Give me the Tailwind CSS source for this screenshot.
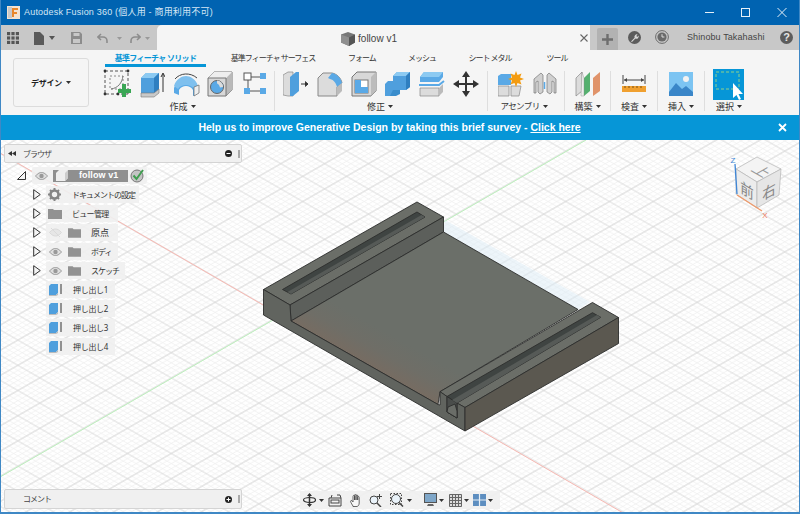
<!DOCTYPE html>
<html lang="ja">
<head>
<meta charset="utf-8">
<title>Autodesk Fusion 360</title>
<script src="https://cdn.jsdelivr.net/npm/@tailwindcss/browser@4"></script>
</head>
<body class="m-0 bg-white [font-family:'Noto_Sans','Noto_Sans_CJK_JP',sans-serif]">
<div class="relative flex h-[514px] w-[800px] flex-col overflow-hidden">

  <!-- Title bar -->
  <header class="flex h-[25px] items-center bg-[#0063b1] text-white">
    <svg class="ml-[7px] h-[13px] w-[13px]" viewBox="0 0 13 13"><rect width="13" height="13" fill="#f4e3d0"/><rect x="1" y="1" width="4" height="11" fill="#c9c9c9"/><path d="M5 2h6v2H7v2h3v2H7v3H5z" fill="#e8872b"/></svg>
    <span class="ml-[4px] whitespace-nowrap text-[9px] leading-none tracking-[0.2px] text-[#d5e6f5] [font-family:'Liberation_Sans','Noto_Sans_CJK_JP',sans-serif]">Autodesk Fusion 360 (個人用 - 商用利用不可)</span>
    <div class="ml-auto flex items-center">
      <svg class="h-[25px] w-[36px]" viewBox="0 0 36 25"><path d="M13 12.5h9" stroke="#e6f0f8" stroke-width="1"/></svg>
      <svg class="h-[25px] w-[36px]" viewBox="0 0 36 25"><rect x="13.5" y="8.5" width="8" height="8" fill="none" stroke="#e6f0f8"/></svg>
      <svg class="h-[25px] w-[36px]" viewBox="0 0 36 25"><path d="M13.5 8l9 9M22.5 8l-9 9" stroke="#e6f0f8"/></svg>
    </div>
  </header>

  <!-- Document tab row -->
  <div class="flex h-[25px] items-stretch bg-[#c8c8c8]">
    <div class="flex w-[157px] items-center pt-[1px]">
      <svg class="ml-[7px] h-[12px] w-[12px]" viewBox="0 0 12 12" fill="#555"><rect width="3.2" height="3.2"/><rect x="4.4" width="3.2" height="3.2"/><rect x="8.8" width="3.2" height="3.2"/><rect y="4.4" width="3.2" height="3.2"/><rect x="4.4" y="4.4" width="3.2" height="3.2"/><rect x="8.8" y="4.4" width="3.2" height="3.2"/><rect y="8.8" width="3.2" height="3.2"/><rect x="4.4" y="8.8" width="3.2" height="3.2"/><rect x="8.8" y="8.8" width="3.2" height="3.2"/></svg>
      <svg class="ml-[15px] h-[13px] w-[10px]" viewBox="0 0 10 13"><path d="M0 0h6l4 4v9H0z" fill="#5a5a5a"/></svg>
      <svg class="ml-[5px] h-[4px] w-[6px]" viewBox="0 0 6 4"><path d="M0 0h6L3 4z" fill="#555"/></svg>
      <svg class="ml-[16px] h-[12px] w-[11px]" viewBox="0 0 11 12"><path d="M0 0h9l2 2v10H0z" fill="#8c8c8c"/><rect x="2.5" y="1" width="6" height="3" fill="#c8c8c8"/><rect x="2" y="7" width="7" height="4" fill="#c8c8c8"/></svg>
      <svg class="ml-[15px] h-[11px] w-[11px]" viewBox="0 0 11 11"><path d="M4 1L.8 4 4 7M1 4h5a4 4 0 0 1 4 4v2" fill="none" stroke="#8c8c8c" stroke-width="1.6"/></svg>
      <svg class="ml-[9px] h-[3px] w-[5px]" viewBox="0 0 5 3"><path d="M0 0h5L2.5 3z" fill="#999"/></svg>
      <svg class="ml-[8px] h-[11px] w-[11px]" viewBox="0 0 11 11"><path d="M7 1l3.2 3L7 7M10 4H5a4 4 0 0 0-4 4v2" fill="none" stroke="#8c8c8c" stroke-width="1.6"/></svg>
      <svg class="ml-[4px] h-[3px] w-[5px]" viewBox="0 0 5 3"><path d="M0 0h5L2.5 3z" fill="#999"/></svg>
    </div>
    <div class="relative flex w-[433px] items-center justify-center rounded-tl-[5px] bg-[#f5f5f5] pr-[9px] pt-[2px]">
      <svg class="mr-[3px] h-[14px] w-[14px]" viewBox="0 0 14 14"><path d="M7 0l7 2.5v8L8 14l-8-3.5v-8z" fill="#777"/><path d="M0 2.5l8 3V14l-8-3.5z" fill="#8f8f8f"/><path d="M8 5.5l6-3v8L8 14z" fill="#555"/></svg>
      <span class="text-[10px] leading-none text-[#444] [font-family:'Liberation_Sans',sans-serif]">follow v1</span>
      <svg class="absolute right-[2px] top-[9px] h-[8px] w-[8px]" viewBox="0 0 8 8"><path d="M.5.5l7 7M7.5.5l-7 7" stroke="#666" stroke-width="1.1"/></svg>
    </div>
    <div class="mt-[3px] ml-[7px] flex w-[21px] items-center justify-center rounded-t-[2px] bg-[#b2b2b2]">
      <svg class="h-[11px] w-[11px]" viewBox="0 0 11 11"><path d="M5.5 0v11M0 5.5h11" stroke="#6e6e6e" stroke-width="2.4"/></svg>
    </div>
    <svg class="ml-[10px] mt-[6px] h-[13px] w-[13px]" viewBox="0 0 13 13"><circle cx="6.5" cy="6.5" r="6.5" fill="#5c5c5c"/><path d="M3 10.5l3.6-3.8a2.4 2.4 0 0 1 3-3.2L8.3 5l1 1 1.3-1.4a2.4 2.4 0 0 1-3.2 3L4 11z" fill="#d8d8d8"/></svg>
    <svg class="ml-[14px] mt-[5px] h-[14px] w-[14px]" viewBox="0 0 14 14"><circle cx="7" cy="7" r="6.4" fill="none" stroke="#6a6a6a"/><circle cx="7" cy="7" r="4.6" fill="#6a6a6a"/><path d="M7 4.2V7h2.4" fill="none" stroke="#ddd"/></svg>
    <span class="ml-[18px] flex w-[79px] items-center whitespace-nowrap text-[9px] leading-none tracking-[0.1px] text-[#444] [font-family:'Liberation_Sans',sans-serif]">Shinobu Takahashi</span>
    <svg class="mt-[6px] ml-[14px] h-[13px] w-[13px]" viewBox="0 0 13 13"><circle cx="6.5" cy="6.5" r="6.5" fill="#5c5c5c"/><text x="6.5" y="10.4" font-size="11" font-weight="700" text-anchor="middle" fill="#e6e6e6" font-family="Liberation Sans">?</text></svg>
  </div>

  <!-- Ribbon -->
  <div class="flex h-[65px] bg-[#f5f5f5]">
    <div class="w-[101px] pl-[13px] pt-[8px]">
      <div class="flex h-[49px] w-[76px] items-center justify-center gap-[4px] rounded-[3px] border border-[#dcdcdc] text-[8px] font-bold leading-none tracking-[-0.2px] text-[#222]">デザイン
        <svg class="h-[3px] w-[5px]" viewBox="0 0 5 3"><path d="M0 0h5L2.5 3z" fill="#333"/></svg>
      </div>
    </div>
    <div class="flex flex-1 flex-col">
      <nav class="flex h-[17px] whitespace-nowrap text-center text-[8px] leading-none tracking-[-1px] text-[#333]">
        <div class="ml-[4px] w-[101px] border-b-[3px] border-[#0696d7] pt-[4px] font-bold tracking-[-0.7px] text-[#0696d7]">基準フィーチャ ソリッド</div>
        <div class="w-[134px] pt-[4px]">基準フィーチャ サーフェス</div>
        <div class="w-[44px] pt-[4px]">フォーム</div>
        <div class="w-[76px] pt-[4px]">メッシュ</div>
        <div class="w-[60px] pt-[4px]">シート メタル</div>
        <div class="w-[74px] pt-[4px]">ツール</div>
      </nav>
      <div class="flex flex-1 text-[9px] leading-none text-[#333]">
        <!-- Create -->
        <section class="flex w-[173px] flex-col items-start">
          <div class="flex">
            <span class="flex h-[34px] w-[34px] items-center justify-center"><svg class="h-[30px] w-[30px]" viewBox="0 0 30 30"><rect x="2" y="2" width="23" height="23" fill="none" stroke="#555" stroke-dasharray="3 2"/><rect x="7" y="7" width="13" height="13" fill="none" stroke="#888" stroke-dasharray="2 2"/><path d="M8 20c7-1 11-6 12-13" fill="none" stroke="#777"/><circle cx="2" cy="2" r="1.4" fill="#333"/><circle cx="25" cy="2" r="1.4" fill="#333"/><circle cx="2" cy="25" r="1.4" fill="#333"/><circle cx="15" cy="25" r="1.4" fill="#333"/><path d="M21 15v13M15 22h13" stroke="#3aa655" stroke-width="4"/></svg></span>
            <span class="flex h-[34px] w-[34px] items-center justify-center"><svg class="h-[28px] w-[26px]" viewBox="0 0 26 28"><path d="M2 8l5-5h13v19l-5 4H2z" fill="#4f9fdd"/><path d="M2 8l5-5h13l-5 5z" fill="#8ccaf2"/><path d="M15 8l5-5v19l-5 4z" fill="#2f7fc0"/><path d="M2 23h13l5-4v4l-5 4H2z" fill="#c9c9c9" stroke="#777" stroke-width=".6"/><path d="M24 22V4M22 7l2-4 2 4" fill="none" stroke="#333" stroke-width="1"/></svg></span>
            <span class="flex h-[34px] w-[34px] items-center justify-center"><svg class="h-[26px] w-[28px]" viewBox="0 0 28 26"><path d="M2 17c2-6 8-9 12-9s10 3 12 9v5l-5 3v-6c-2-3-4-4-7-4s-5 1-7 4v5l-5-2z" fill="#5aa9e6"/><path d="M2 15c2-7 8-10 12-10s10 3 12 10l-4 3c-2-3-5-4-8-4s-6 1-8 4z" fill="#7fc0ee"/><path d="M3 8C8 2 18 1 25 7" fill="none" stroke="#444"/><path d="M22 16l5-2v8l-5 3z" fill="#eee" stroke="#666" stroke-width=".7"/></svg></span>
            <span class="flex h-[34px] w-[34px] items-center justify-center"><svg class="h-[26px] w-[26px]" viewBox="0 0 26 26"><path d="M1 7l6-6h18v18l-6 6H1z" fill="#d8d8d8" stroke="#777"/><path d="M19 7l6-6v18l-6 6z" fill="#b9b9b9"/><path d="M1 7l6-6h18l-6 6z" fill="#eee"/><path d="M1 7h18v18" fill="none" stroke="#777"/><circle cx="10" cy="16" r="6.5" fill="#5aa9e6" stroke="#666"/><path d="M10 9.5a6.500 6.500 0 0 1 6 6.500l-3 .5c-1-3-2-4-3-4z" fill="#dcdcdc"/></svg></span>
            <span class="flex h-[34px] w-[34px] items-center justify-center"><svg class="h-[24px] w-[23px]" viewBox="0 0 23 24"><path d="M5 5h13M5 19h13M5 5v14" stroke="#555"/><rect x="1" y="1" width="7" height="7" fill="#fff" stroke="#555"/><rect x="17" y="1" width="6" height="6" fill="#5aa9e6"/><rect x="1" y="16" width="6" height="6" fill="#5aa9e6"/><rect x="17" y="16" width="6" height="6" fill="#5aa9e6"/></svg></span>
          </div>
          <div class="mt-[1px] flex w-[163px] items-center justify-center gap-[3px]">作成<svg class="h-[3px] w-[5px]" viewBox="0 0 5 3"><path d="M0 0h5L2.5 3z" fill="#333"/></svg></div>
        </section>
        <i class="my-[4px] w-px bg-[#dedede]"></i>
        <!-- Modify -->
        <section class="flex w-[212px] flex-col pl-[4px]">
          <div class="flex">
            <span class="flex h-[34px] w-[34px] items-center justify-center"><svg class="h-[26px] w-[26px]" viewBox="0 0 26 26"><path d="M0 4l5-3h5v24H5l-5-1z" fill="#dcdcdc" stroke="#888" stroke-width=".7"/><path d="M7 6l6-5h3v19l-6 5H7z" fill="#4f9fdd"/><path d="M18 13h6M22 10.500l3 2.500-3 2.500" fill="#333" stroke="#333"/></svg></span>
            <span class="flex h-[34px] w-[34px] items-center justify-center"><svg class="h-[26px] w-[26px]" viewBox="0 0 26 26"><path d="M1 7l5-5h9c5 1 9 5 10 10l-5 4v9H1z" fill="#dcdcdc" stroke="#888"/><path d="M15 2c5 1 9 5 10 10l-5 4c-1-4-3-7-7-8l-2-1z" fill="#5aa9e6"/><path d="M20 16l5-4v8l-5 5z" fill="#bbb"/></svg></span>
            <span class="flex h-[34px] w-[34px] items-center justify-center"><svg class="h-[26px] w-[26px]" viewBox="0 0 26 26"><path d="M1 6l5-5h19v19l-5 5H1z" fill="#d8d8d8" stroke="#777"/><path d="M20 6l5-5v19l-5 5z" fill="#bcbcbc"/><rect x="4" y="9" width="13" height="13" fill="#fff" stroke="#777"/><path d="M4 9h6v7h7v6H4z" fill="#5aa9e6"/></svg></span>
            <span class="flex h-[34px] w-[34px] items-center justify-center"><svg class="h-[26px] w-[26px]" viewBox="0 0 26 26"><path d="M0 13l3-3h8v15H0z" fill="#4f9fdd"/><path d="M8 5l4-4h13v15l-4 3H8z" fill="#4f9fdd"/><path d="M8 5l4-4h13l-4 4z" fill="#8ccaf2"/><path d="M21 5l4-4v15l-4 3z" fill="#2f7fc0"/><path d="M8 19h7v4l-4 2H5z" fill="#3a8dcc"/></svg></span>
            <span class="flex h-[34px] w-[34px] items-center justify-center"><svg class="h-[26px] w-[26px]" viewBox="0 0 26 26"><path d="M1 6l4-5h19v5l-4 5H1z" fill="#5aa9e6"/><path d="M1 6l4-5h19l-4 5z" fill="#8ccaf2"/><path d="M0 14h20l5-4" fill="none" stroke="#5aa9e6" stroke-width="2"/><path d="M1 17h19v8H1z" fill="#dcdcdc" stroke="#888" stroke-width=".7"/><path d="M20 17l4-4v8l-4 4z" fill="#bbb"/></svg></span>
            <span class="flex h-[34px] w-[34px] items-center justify-center"><svg class="h-[26px] w-[26px]" viewBox="0 0 26 26"><path d="M13 3v20M3 13h20" stroke="#333" stroke-width="2"/><path d="M13 0l4 6H9zM13 26l-4-6h8zM0 13l6-4v8zM26 13l-6 4V9z" fill="#333"/></svg></span>
          </div>
          <div class="mt-[1px] flex w-[202px] items-center justify-center gap-[3px]">修正<svg class="h-[3px] w-[5px]" viewBox="0 0 5 3"><path d="M0 0h5L2.500 3z" fill="#333"/></svg></div>
        </section>
        <i class="my-[4px] w-px bg-[#dedede]"></i>
        <!-- Assemble -->
        <section class="flex w-[76px] flex-col pl-[6px]">
          <div class="flex">
            <span class="flex h-[34px] w-[34px] items-center justify-center"><svg class="h-[26px] w-[26px]" viewBox="0 0 26 26"><path d="M0 5l3-2h10v11H0z" fill="#5aa9e6"/><path d="M0 15h11v10H0z" fill="#dcdcdc" stroke="#888" stroke-width=".7"/><path d="M13 15h10l-2 10H13z" fill="#dcdcdc" stroke="#888" stroke-width=".7"/><path d="M18 0l1.500 4 4-1.500-1.500 4 4 1.500-4 1.500 1.500 4-4-1.500-1.500 4-1.500-4-4 1.500 1.500-4-4-1.500 4-1.500-1.500-4 4 1.500z" fill="#f39c12"/></svg></span>
            <span class="flex h-[34px] w-[34px] items-center justify-center"><svg class="h-[24px] w-[24px]" viewBox="0 0 24 24"><path d="M1 7l7-6 2 2v17l-3 2-2-2V9L3 10v11H1zM14 3l2-2 7 6v14h-2V10l-2-1v11l-2 2-3-2z" fill="#d0d0d0" stroke="#777" stroke-width=".7"/><path d="M11.500 10v7" stroke="#5aa9e6" stroke-width="1.500"/></svg></span>
          </div>
          <div class="mt-[1px] flex w-[60px] items-center justify-center gap-[3px] whitespace-nowrap text-[8.5px] tracking-[-0.6px]">アセンブリ<svg class="h-[3px] w-[5px]" viewBox="0 0 5 3"><path d="M0 0h5L2.500 3z" fill="#333"/></svg></div>
        </section>
        <i class="my-[4px] w-px bg-[#dedede]"></i>
        <!-- Construct -->
        <section class="flex w-[45px] flex-col items-center">
          <span class="flex h-[34px] w-[34px] items-center justify-center"><svg class="h-[26px] w-[25px]" viewBox="0 0 25 26"><path d="M1 7l6-6v19l-6 5z" fill="#dcdcdc" stroke="#888" stroke-width=".7"/><path d="M9 7l6-6v19l-6 5z" fill="#55b06f"/><path d="M18 7l7-6v19l-7 5z" fill="#e0936a"/><path d="M7 1l2 6v18H6z" fill="#eee" stroke="#888" stroke-width=".4"/></svg></span>
          <div class="mt-[1px] flex items-center gap-[3px]">構築<svg class="h-[3px] w-[5px]" viewBox="0 0 5 3"><path d="M0 0h5L2.500 3z" fill="#333"/></svg></div>
        </section>
        <i class="my-[4px] w-px bg-[#dedede]"></i>
        <!-- Inspect -->
        <section class="flex w-[46px] flex-col items-center">
          <span class="flex h-[34px] w-[34px] items-center justify-center"><svg class="h-[20px] w-[24px]" viewBox="0 0 24 20"><path d="M1 1v9M23 1v9M2 6h20" stroke="#444"/><path d="M2 6l3-2v4zM22 6l-3-2v4z" fill="#444"/><rect y="12" width="24" height="6" fill="#f0a030"/><path d="M3 12v2M7 12v2M11 12v2M15 12v2M19 12v2" stroke="#7a5010"/></svg></span>
          <div class="mt-[1px] flex items-center gap-[3px]">検査<svg class="h-[3px] w-[5px]" viewBox="0 0 5 3"><path d="M0 0h5L2.500 3z" fill="#333"/></svg></div>
        </section>
        <i class="my-[4px] w-px bg-[#dedede]"></i>
        <!-- Insert -->
        <section class="flex w-[46px] flex-col items-center">
          <span class="flex h-[34px] w-[34px] items-center justify-center"><svg class="h-[24px] w-[24px]" viewBox="0 0 24 24"><rect width="24" height="24" fill="#7cc4f2"/><path d="M0 20l7-9 6 6 4-3 7 6v4H0z" fill="#3a86c8"/><circle cx="17" cy="7" r="3" fill="#f2f2f2"/></svg></span>
          <div class="mt-[1px] flex items-center gap-[3px]">挿入<svg class="h-[3px] w-[5px]" viewBox="0 0 5 3"><path d="M0 0h5L2.500 3z" fill="#333"/></svg></div>
        </section>
        <i class="my-[4px] w-px bg-[#dedede]"></i>
        <!-- Select -->
        <section class="flex flex-1 flex-col pl-[8px]">
          <span class="mt-[2px] flex h-[31px] w-[31px] items-center justify-center bg-[#0696d7]"><svg class="h-[31px] w-[31px]" viewBox="0 0 31 31"><rect x="3" y="3" width="23" height="17" fill="none" stroke="#8fd08a" stroke-dasharray="3 2"/><path d="M20 14v15l3.500-3 2.500 5 2-1-2.500-5h4.500z" fill="#fff"/></svg></span>
          <div class="mt-[2px] flex w-[32px] items-center justify-center gap-[3px]">選択<svg class="h-[3px] w-[5px]" viewBox="0 0 5 3"><path d="M0 0h5L2.500 3z" fill="#333"/></svg></div>
        </section>
      </div>
    </div>
  </div>

  <!-- Survey banner -->
  <div class="relative flex h-[25px] items-center justify-center bg-[#0696d7] pr-[21px] text-[10.5px] font-bold leading-none text-white [font-family:'Liberation_Sans',sans-serif]">
    <p>Help us to improve Generative Design by taking this brief survey - <a class="underline">Click here</a></p>
    <svg class="absolute right-[13px] top-[8px] h-[9px] w-[9px]" viewBox="0 0 9 9"><path d="M1 1l7 7M8 1L1 8" stroke="#fff" stroke-width="1.800"/></svg>
  </div>

  <!-- Canvas -->
  <main class="relative flex-1 bg-white">
    <svg class="absolute inset-0 h-full w-full" viewBox="0 140 800 374">
      <defs>
        <pattern id="grid" patternUnits="userSpaceOnUse" width="25.3" height="25.3" patternTransform="matrix(.866 .498 .866 -.498 653.300 352.700)">
          <path d="M5.060 0v25.300M10.120 0v25.300M15.180 0v25.300M20.240 0v25.300M0 5.060h25.300M0 10.120h25.300M0 15.180h25.300M0 20.240h25.300" stroke="#f1f1f1" stroke-width=".9"/>
          <path d="M0 0v25.300M25.300 0v25.300M0 0h25.300M0 25.300h25.300" stroke="#d9d9d9" stroke-width="1.200"/>
        </pattern>
        <linearGradient id="floor" gradientUnits="userSpaceOnUse" x1="365" y1="362" x2="383" y2="330">
          <stop offset="0" stop-color="#766c62"/><stop offset=".45" stop-color="#6f6e67"/><stop offset="1" stop-color="#6b6f69"/>
        </linearGradient>
      </defs>
      <rect y="140" width="800" height="374" fill="url(#grid)"/>
      <path d="M0 153L625 514" stroke="#f6b8b2" stroke-width="1"/>
      <path d="M0 477L586 140" stroke="#bdf0bd" stroke-width="1"/>
      <path d="M445 220L590 302 578 309.500 443 232z" fill="#dcecf6" opacity=".5"/>

      <!-- Part -->
      <g stroke="#2c2e2c" stroke-width=".9" stroke-linejoin="round">
        <path d="M263.500 289.500L417 202 443.500 217 290 305z" fill="#6b6e68"/>
        <path d="M282.500 289.500L417 212 425 217 291 294z" fill="#3f4442"/>
        <path d="M290 305L443.500 217V232L291 321z" fill="#5c5f5b"/>
        <path d="M291 321L443.500 232 578 309.500 440 391.700 438 404.500z" fill="url(#floor)"/>
        <path d="M592.500 302.500L618.500 317.500 465 407.500 457 403 447 396.500 440 391.700z" fill="#6b6e68"/>
        <path d="M592.500 312.700L600.700 317.300 457 403 447 396.500z" fill="#3f4442"/>
        <path d="M263.500 289.500L290 305 291 321 438 404.500 440 405V391.700L447 396.500V412L457 418V403L465 407.500V431L263.500 315z" fill="#61645f"/>
        <path d="M447 396.500L457 403V418L447 412z" fill="#4a4d4b"/>
        <path d="M448 407L455 404 457 411 457 418 447 412z" fill="#6a6d68"/>
        <path d="M465 407.500L618.500 317.500V343.500L465 431z" fill="#5b5850"/>
      </g>
      <path d="M287.500 292L421.500 215 425 217 291 294z" fill="#565a57"/>
      <path d="M452 400L597 315 600.700 317.300 457 403z" fill="#565a57"/>

      <!-- View cube -->
      <g stroke="#b5b5b5" stroke-width=".7">
        <path d="M757 157L781 169 757 182 736 169z" fill="#f4f4f4"/>
        <path d="M736 169L757 182V208L736 194z" fill="#ececec"/>
        <path d="M757 182L781 169 779 195 757 208z" fill="#e6e6e6"/>
      </g>
      <path d="M735 164L737 194" stroke="#3f86d6" stroke-width="1.300"/>
      <path d="M737 195L762 211" stroke="#ef9a6a" stroke-width="1.300"/>
      <text x="733" y="163" font-size="8" text-anchor="middle" fill="#3f86d6" font-family="Liberation Sans">Z</text>
      <text x="765" y="218" font-size="8" text-anchor="middle" fill="#ef7a5a" font-family="Liberation Sans">X</text>
      <text transform="matrix(.95 .55 -.95 .55 757 174)" font-size="14" text-anchor="middle" fill="#9a9a9a" font-family="Noto Sans CJK JP">上</text>
      <text transform="matrix(.9 .55 0 1 747 196)" font-size="15" text-anchor="middle" fill="#858585" font-family="Noto Sans CJK JP">前</text>
      <text transform="matrix(.9 -.5 0 1 769 197)" font-size="15" text-anchor="middle" fill="#858585" font-family="Noto Sans CJK JP">右</text>
    </svg>

    <!-- Browser panel -->
    <div class="absolute left-[4px] top-[4px] w-[238px]">
      <div class="flex h-[19px] items-center rounded-[2px] border border-[#d4d4d4] bg-[#f0f0f0] text-[8px] leading-none tracking-[-1px] text-[#444]">
        <svg class="ml-[3px] h-[5px] w-[8px]" viewBox="0 0 8 5"><path d="M4 0v5L0 2.500zM8 0v5L4 2.500z" fill="#333"/></svg>
        <span class="ml-[7px]">ブラウザ</span>
        <svg class="ml-auto h-[7px] w-[7px]" viewBox="0 0 7 7"><circle cx="3.500" cy="3.500" r="3.500" fill="#222"/><path d="M1.500 3.500h4" stroke="#fff"/></svg>
        <i class="ml-[6px] mr-[1px] h-[8px] w-[2px] bg-[#aaa]"></i>
      </div>
      <ul class="mt-[3px] flex flex-col whitespace-nowrap text-[8px] leading-none tracking-[-0.7px] text-[#333]">
        <li class="flex h-[19px] items-center pl-[13px]">
          <svg class="h-[9px] w-[9px]" viewBox="0 0 9 9"><path d="M.5 8.500L8.500.5v8z" fill="#f4f4f4" stroke="#333"/></svg>
          <span class="ml-[6px] flex h-[17px] items-center rounded-[2px] bg-[#f0f0f0]/90 pl-[3px] pr-[2px]">
            <svg class="h-[8px] w-[13px]" viewBox="0 0 13 8"><path d="M.5 4C3 1 5 .5 6.500.5S10 1 12.500 4C10 7 8 7.500 6.500 7.500S3 7 .5 4z" fill="#dedede" stroke="#999"/><circle cx="6.500" cy="4" r="2.200" fill="#999"/></svg>
            <span class="ml-[5px] flex h-[12px] w-[75px] items-center bg-[#8f8f8f] text-[9px] font-bold tracking-[0.1px] text-white [font-family:'Liberation_Sans',sans-serif]">
              <svg class="ml-[3px] h-[11px] w-[12px]" viewBox="0 0 12 11"><path d="M0 3l3-3h9v8l-3 3H0z" fill="#eee"/><path d="M9 3l3-3v8l-3 3z" fill="#ccc"/></svg>
              <span class="ml-[11px]">follow v1</span>
            </span>
            <svg class="ml-[2px] h-[15px] w-[15px]" viewBox="0 0 15 15"><circle cx="7" cy="8" r="6" fill="#c4c4c4" stroke="#777"/><path d="M3.500 7.500l3 3.500L13 2" fill="none" stroke="#3f9d4f" stroke-width="2"/></svg>
          </span>
        </li>
        <li class="flex h-[19px] items-center pl-[29px]">
          <svg class="h-[11px] w-[8px]" viewBox="0 0 8 11"><path d="M.7.7l6.600 4.800-6.600 4.800z" fill="#f4f4f4" stroke="#333"/></svg>
          <span class="ml-[5px] flex h-[17px] w-[93px] items-center bg-[#f0f0f0]/90 pl-[2px]">
            <svg class="h-[13px] w-[13px]" viewBox="0 0 13 13"><circle cx="6.500" cy="6.500" r="4" fill="none" stroke="#858585" stroke-width="2.600"/><path d="M6.500 0v2.500M6.500 10.500V13M0 6.500h2.500M10.500 6.500H13M2 2l1.800 1.800M9.200 9.200L11 11M2 11l1.800-1.800M9.200 3.800L11 2" stroke="#858585" stroke-width="2"/></svg>
            <span class="ml-[11px] tracking-[-1px]">ドキュメントの設定</span>
          </span>
        </li>
        <li class="flex h-[19px] items-center pl-[29px]">
          <svg class="h-[11px] w-[8px]" viewBox="0 0 8 11"><path d="M.7.7l6.600 4.800-6.600 4.800z" fill="#f4f4f4" stroke="#333"/></svg>
          <span class="ml-[5px] flex h-[17px] w-[72px] items-center bg-[#f0f0f0]/90 pl-[2px]">
            <svg class="h-[10px] w-[14px]" viewBox="0 0 14 10"><path d="M0 0h5l1 1h8v9H0z" fill="#929292"/></svg>
            <span class="ml-[10px]">ビュー管理</span>
          </span>
        </li>
        <li class="flex h-[19px] items-center pl-[29px]">
          <svg class="h-[11px] w-[8px]" viewBox="0 0 8 11"><path d="M.7.7l6.600 4.800-6.600 4.800z" fill="#f4f4f4" stroke="#333"/></svg>
          <span class="ml-[5px] flex h-[17px] w-[72px] items-center bg-[#f0f0f0]/90 pl-[3px]">
            <svg class="h-[11px] w-[13px]" viewBox="0 0 13 11"><path d="M.5 5.500C3 2.500 5 2 6.500 2S10 2.500 12.500 5.500C10 8.500 8 9 6.500 9S3 8.500.5 5.500z" fill="#e6e6e6" stroke="#dadada"/><path d="M2 1l9 9" stroke="#dadada"/></svg>
            <svg class="ml-[6px] h-[10px] w-[13px]" viewBox="0 0 14 10"><path d="M0 0h5l1 1h8v9H0z" fill="#929292"/></svg>
            <span class="ml-[10px] text-[9px] tracking-normal">原点</span>
          </span>
        </li>
        <li class="flex h-[19px] items-center pl-[29px]">
          <svg class="h-[11px] w-[8px]" viewBox="0 0 8 11"><path d="M.7.7l6.600 4.800-6.600 4.800z" fill="#f4f4f4" stroke="#333"/></svg>
          <span class="ml-[5px] flex h-[17px] w-[72px] items-center bg-[#f0f0f0]/90 pl-[3px]">
            <svg class="h-[8px] w-[13px]" viewBox="0 0 13 8"><path d="M.5 4C3 1 5 .5 6.500.5S10 1 12.500 4C10 7 8 7.500 6.500 7.500S3 7 .5 4z" fill="#dedede" stroke="#999"/><circle cx="6.500" cy="4" r="2.200" fill="#999"/></svg>
            <svg class="ml-[6px] h-[10px] w-[13px]" viewBox="0 0 14 10"><path d="M0 0h5l1 1h8v9H0z" fill="#929292"/></svg>
            <span class="ml-[10px] tracking-[-1px]">ボディ</span>
          </span>
        </li>
        <li class="flex h-[19px] items-center pl-[29px]">
          <svg class="h-[11px] w-[8px]" viewBox="0 0 8 11"><path d="M.7.7l6.600 4.800-6.600 4.800z" fill="#f4f4f4" stroke="#333"/></svg>
          <span class="ml-[5px] flex h-[17px] w-[79px] items-center bg-[#f0f0f0]/90 pl-[3px]">
            <svg class="h-[8px] w-[13px]" viewBox="0 0 13 8"><path d="M.5 4C3 1 5 .5 6.500.5S10 1 12.500 4C10 7 8 7.500 6.500 7.500S3 7 .5 4z" fill="#dedede" stroke="#999"/><circle cx="6.500" cy="4" r="2.200" fill="#999"/></svg>
            <svg class="ml-[6px] h-[10px] w-[13px]" viewBox="0 0 14 10"><path d="M0 0h5l1 1h8v9H0z" fill="#929292"/></svg>
            <span class="ml-[10px] tracking-[-1px]">スケッチ</span>
          </span>
        </li>
        <li class="flex h-[19px] items-center pl-[42px]">
          <span class="flex h-[17px] w-[69px] items-center bg-[#f0f0f0]/90 pl-[3px]">
            <svg class="h-[13px] w-[13px]" viewBox="0 0 13 13"><path d="M0 3l2-2h7v9l-2 2H0z" fill="#4f9fdd"/><path d="M0 12h7l2-2v2l-2 1H0z" fill="#bbb"/><path d="M12 11V1" stroke="#333"/></svg>
            <span class="ml-[11px] tracking-[-0.3px]">押し出し1</span>
          </span>
        </li>
        <li class="flex h-[19px] items-center pl-[42px]">
          <span class="flex h-[17px] w-[69px] items-center bg-[#f0f0f0]/90 pl-[3px]">
            <svg class="h-[13px] w-[13px]" viewBox="0 0 13 13"><path d="M0 3l2-2h7v9l-2 2H0z" fill="#4f9fdd"/><path d="M0 12h7l2-2v2l-2 1H0z" fill="#bbb"/><path d="M12 11V1" stroke="#333"/></svg>
            <span class="ml-[11px] tracking-[-0.3px]">押し出し2</span>
          </span>
        </li>
        <li class="flex h-[19px] items-center pl-[42px]">
          <span class="flex h-[17px] w-[69px] items-center bg-[#f0f0f0]/90 pl-[3px]">
            <svg class="h-[13px] w-[13px]" viewBox="0 0 13 13"><path d="M0 3l2-2h7v9l-2 2H0z" fill="#4f9fdd"/><path d="M0 12h7l2-2v2l-2 1H0z" fill="#bbb"/><path d="M12 11V1" stroke="#333"/></svg>
            <span class="ml-[11px] tracking-[-0.3px]">押し出し3</span>
          </span>
        </li>
        <li class="flex h-[19px] items-center pl-[42px]">
          <span class="flex h-[17px] w-[69px] items-center bg-[#f0f0f0]/90 pl-[3px]">
            <svg class="h-[13px] w-[13px]" viewBox="0 0 13 13"><path d="M0 3l2-2h7v9l-2 2H0z" fill="#4f9fdd"/><path d="M0 12h7l2-2v2l-2 1H0z" fill="#bbb"/><path d="M12 11V1" stroke="#333"/></svg>
            <span class="ml-[11px] tracking-[-0.3px]">押し出し4</span>
          </span>
        </li>
      </ul>
    </div>

    <!-- Comment panel -->
    <div class="absolute bottom-[5px] left-[4px] flex h-[20px] w-[238px] items-center rounded-[2px] border border-[#d4d4d4] bg-[#f0f0f0] text-[8px] leading-none tracking-[-1px] text-[#444]">
      <span class="ml-[18px]">コメント</span>
      <svg class="ml-auto h-[7px] w-[7px]" viewBox="0 0 7 7"><circle cx="3.500" cy="3.500" r="3.500" fill="#222"/><path d="M1.500 3.500h4M3.500 1.500v4" stroke="#fff"/></svg>
      <i class="ml-[6px] mr-[1px] h-[8px] w-[2px] bg-[#aaa]"></i>
    </div>

    <!-- Navigation bar -->
    <div class="absolute bottom-[5px] left-[300px] flex h-[18px] w-[200px] items-center bg-[#f0f0f0]/90 pl-[3px]">
      <svg class="h-[14px] w-[13px]" viewBox="0 0 13 14"><path d="M6.500 1v12" stroke="#333" stroke-width="1.500"/><path d="M6.500 0l2.500 3H4zM6.500 14L4 11h5z" fill="#333"/><ellipse cx="6.500" cy="7" rx="6" ry="2.500" fill="none" stroke="#333" stroke-width="1.200"/></svg>
      <svg class="ml-[3px] h-[3px] w-[5px]" viewBox="0 0 5 3"><path d="M0 0h5L2.500 3z" fill="#333"/></svg>
      <svg class="ml-[4px] h-[13px] w-[14px]" viewBox="0 0 14 13"><path d="M1 4h12v8H1zM3 4l1-3M9 1h3l1 3" fill="none" stroke="#444"/><rect x="3" y="6" width="8" height="3" fill="none" stroke="#444"/></svg>
      <svg class="ml-[8px] h-[13px] w-[12px]" viewBox="0 0 12 13"><path d="M3 12C1 9 0 7 1 6.500S3 8 3 8V2.500C3 1 4.500 1 4.500 2.500V6 1.500C4.500 0 6 0 6 1.500V6 2C6 .5 7.700.5 7.700 2v4-2.500c0-1.500 1.500-1.500 1.500 0V9c0 2-1 3-2 3.500H3z" fill="#f8f8f8" stroke="#444" stroke-width=".8"/></svg>
      <svg class="ml-[7px] h-[13px] w-[13px]" viewBox="0 0 13 13"><circle cx="5" cy="6" r="4" fill="#eaf3fa" stroke="#444"/><path d="M8 9l4 4" stroke="#444" stroke-width="1.500"/><path d="M10.500 0v5M8 2.500h5" stroke="#444"/></svg>
      <svg class="ml-[8px] h-[14px] w-[14px]" viewBox="0 0 14 14"><rect x=".5" y=".5" width="11" height="11" fill="none" stroke="#444" stroke-dasharray="1.500 1.500"/><circle cx="6" cy="6" r="4.500" fill="#eaf3fa" stroke="#444"/><path d="M9 9.500l4 4" stroke="#444" stroke-width="1.500"/></svg>
      <svg class="ml-[3px] h-[3px] w-[5px]" viewBox="0 0 5 3"><path d="M0 0h5L2.500 3z" fill="#333"/></svg>
      <svg class="ml-[12px] h-[14px] w-[13px]" viewBox="0 0 13 14"><rect x=".5" y=".5" width="12" height="9" fill="#7fa7c9" stroke="#555"/><path d="M4 11h5l1 2H3z" fill="#666"/></svg>
      <svg class="ml-[2px] h-[3px] w-[5px]" viewBox="0 0 5 3"><path d="M0 0h5L2.500 3z" fill="#333"/></svg>
      <svg class="ml-[5px] h-[13px] w-[13px]" viewBox="0 0 13 13"><path d="M.5.5h12v12H.5zM3.500.5v12M6.500.5v12M9.500.5v12M.5 3.500h12M.5 6.500h12M.5 9.500h12" fill="#ddd" stroke="#666"/></svg>
      <svg class="ml-[2px] h-[3px] w-[5px]" viewBox="0 0 5 3"><path d="M0 0h5L2.500 3z" fill="#333"/></svg>
      <svg class="ml-[4px] h-[13px] w-[13px]" viewBox="0 0 13 13"><rect width="13" height="12" fill="#5d8ec0"/><path d="M0 6h13M6.500 0v12" stroke="#e8eff6" stroke-width="1.200"/></svg>
      <svg class="ml-[2px] h-[3px] w-[5px]" viewBox="0 0 5 3"><path d="M0 0h5L2.500 3z" fill="#333"/></svg>
    </div>
  </main>

  <!-- Window border -->
  <div class="pointer-events-none absolute inset-0 border-x border-b-2 border-[#3f88c5]"></div>
</div>
</body>
</html>
